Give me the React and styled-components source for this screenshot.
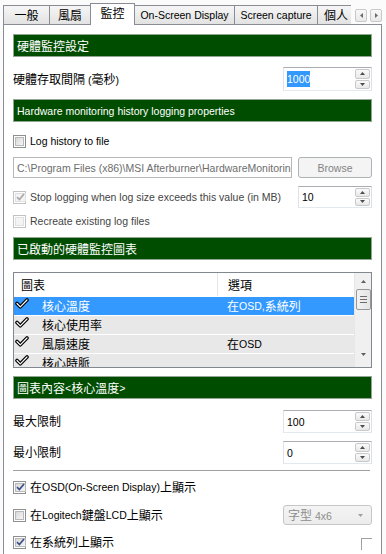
import React from 'react'
import styled, { createGlobalStyle } from 'styled-components'

const GlobalStyle = createGlobalStyle`
  html, body { margin: 0; padding: 0; }
  body {
    width: 386px;
    height: 554px;
    overflow: hidden;
    background: #fbfbfb;
    font-family: "Liberation Sans", "Noto Sans CJK TC", sans-serif;
    font-size: 10.5px;
    line-height: 14px;
    color: #000;
  }
  * { box-sizing: border-box; }
`

const Zh = styled.span`
  font-family: "Noto Sans CJK TC", sans-serif;
  font-size: 12px;
`

const cjk = /([\u3000-\u9fff\uff00-\uffef]+)/
const T = ({ children }) =>
  String(children)
    .split(cjk)
    .map((s, i) => (i % 2 ? <Zh key={i}>{s}</Zh> : s))

const Window = styled.div`
  display: flex;
  flex-direction: column;
  height: 554px;
`

const TabStrip = styled.div`
  display: flex;
  align-items: flex-end;
  height: 25px;
  padding: 3px 0 0 3px;
  position: relative;
  z-index: 1;
`

const TabList = styled.div`
  display: flex;
  align-items: flex-end;
  width: 348px;
  height: 22px;
  overflow: hidden;
`

const Tab = styled.div`
  flex: none;
  width: ${p => p.$w}px;
  height: ${p => (p.$active ? 22 : 19)}px;
  margin-bottom: ${p => (p.$active ? 0 : 1)}px;
  margin-left: -1px;
  border: 1px solid #898c95;
  border-bottom: none;
  background: ${p => (p.$active ? '#fff' : 'linear-gradient(#f6f6f6, #ececec 50%, #e2e2e2)')};
  display: flex;
  align-items: center;
  justify-content: ${p => (p.$left ? 'flex-start' : 'center')};
  padding: ${p => (p.$left ? '0 0 1px 6px' : '0 0 1px')};
  padding-bottom: ${p => (p.$active ? 4 : 1)}px;
  white-space: nowrap;
  &:first-child { margin-left: 0; }
`

const Arrows = styled.div`
  display: flex;
  gap: 3px;
  margin: 0 0 3px 4px;
`

const ArrowBtn = styled.div`
  width: 12px;
  height: 13px;
  border: 1px solid #c9c9c9;
  border-radius: 2px;
  background: linear-gradient(#f8f8f8, #e9e9e9);
  display: flex;
  align-items: center;
  justify-content: center;
`

const Panel = styled.div`
  flex: 1;
  margin: -1px 4px 0 3px;
  border: 1px solid #898c95;
  border-bottom: none;
  background: #fff;
  padding: 9px 9px 0;
  display: flex;
  flex-direction: column;
`

const Header = styled.div`
  height: 23px;
  margin-top: ${p => p.$mt || 0}px;
  background: #004d00;
  border: 1px solid #93a593;
  color: #fff;
  padding-left: 3px;
  display: flex;
  align-items: center;
  white-space: nowrap;
`

const Row = styled.div`
  display: flex;
  align-items: center;
  justify-content: space-between;
  height: ${p => p.$h}px;
  margin-top: ${p => p.$mt}px;
`

const Label = styled.span`
  color: ${p => p.$c || '#000'};
  white-space: nowrap;
`

const CheckLabel = styled.label`
  display: flex;
  align-items: center;
  color: ${p => p.$c || '#000'};
  white-space: nowrap;
`

const Box = styled.span`
  width: 13px;
  height: 13px;
  margin-right: 4px;
  border: 1px solid ${p => (p.$off ? '#c2c2c2' : '#8e8f8f')};
  padding: 1px;
  background: #fff;
  display: flex;
  flex: none;
`

const BoxInner = styled.span`
  flex: 1;
  border: 1px solid ${p => (p.$off ? '#e0e0e0' : '#b9b9b9')};
  background: ${p => (p.$off ? '#f4f4f4' : 'linear-gradient(135deg, #d8d8d8, #f6f6f6)')};
  display: flex;
  align-items: center;
  justify-content: center;
`

const Checkbox = ({ checked, off, children, color }) => (
  <CheckLabel $c={color}>
    <Box $off={off}>
      <BoxInner $off={off}>
        {checked && (
          <svg width="9" height="8" viewBox="0 0 9 8">
            <path
              d="M1 4.2 L3.4 6.6 L8 1"
              fill="none"
              stroke={off ? '#a9a9a9' : '#3b4f8a'}
              strokeWidth="1.7"
            />
          </svg>
        )}
      </BoxInner>
    </Box>
    <T>{children}</T>
  </CheckLabel>
)

const SpinBox = styled.div`
  width: ${p => p.$w}px;
  height: ${p => p.$h || 23}px;
  border: 1px solid #abadb3;
  border-color: #abadb3 #dbdfe6 #e3e9ef #e2e3ea;
  background: #fff;
  display: flex;
  align-items: center;
  padding-left: 3px;
`

const SpinText = styled.span`
  flex: 1;
  display: flex;
  align-items: center;
  span {
    background: ${p => (p.$sel ? '#3399ff' : 'transparent')};
    color: ${p => (p.$sel ? '#fff' : '#000')};
    padding: 1px 0;
  }
`

const SpinBtns = styled.div`
  width: 15px;
  align-self: stretch;
  margin: 1px;
  display: flex;
  flex-direction: column;
  gap: 1px;
`

const SpinBtn = styled.div`
  flex: 1;
  border: 1px solid #c9c9c9;
  border-radius: 2px;
  background: linear-gradient(#fafafa, #e8e8e8);
  display: flex;
  align-items: center;
  justify-content: center;
`

const Tri = ({ dir, color = '#4d4d4d' }) => (
  <svg width="5" height="3" viewBox="0 0 5 3">
    <path d={dir === 'up' ? 'M0 3 L2.5 0 L5 3 Z' : 'M0 0 L5 0 L2.5 3 Z'} fill={color} />
  </svg>
)

const TriSide = ({ dir }) => (
  <svg width="3" height="5" viewBox="0 0 3 5">
    <path d={dir === 'left' ? 'M3 0 L0 2.5 L3 5 Z' : 'M0 0 L3 2.5 L0 5 Z'} fill="#6a6a6a" />
  </svg>
)

const Spin = ({ w, h, value, sel }) => (
  <SpinBox $w={w} $h={h}>
    <SpinText $sel={sel}>
      <span>{value}</span>
    </SpinText>
    <SpinBtns>
      <SpinBtn><Tri dir="up" /></SpinBtn>
      <SpinBtn><Tri dir="down" /></SpinBtn>
    </SpinBtns>
  </SpinBox>
)

const PathField = styled.div`
  width: 279px;
  height: 21px;
  border: 1px solid #b8b8b8;
  background: #fff;
  color: #6d6d6d;
  padding-left: 3px;
  display: flex;
  align-items: center;
  white-space: nowrap;
  overflow: hidden;
`

const Button = styled.div`
  width: 74px;
  height: 21px;
  border: 1px solid #adb2b5;
  border-radius: 3px;
  background: #f4f4f4;
  color: #838383;
  display: flex;
  align-items: center;
  justify-content: center;
`

const List = styled.div`
  margin-top: 12px;
  height: 96px;
  border: 1px solid #828790;
  background: #fff;
  display: flex;
  flex: none;
`

const ListBody = styled.div`
  flex: 1;
  display: flex;
  flex-direction: column;
  overflow: hidden;
`

const ListHead = styled.div`
  height: 24px;
  flex: none;
  display: grid;
  grid-template-columns: 203px 1fr;
  border-bottom: 1px solid #fff;
  div {
    display: flex;
    align-items: center;
    padding-left: 7px;
  }
  div + div {
    border-left: 1px solid #e5e5e5;
    padding-left: 10px;
  }
`

const ListRow = styled.div`
  height: 19px;
  flex: none;
  display: grid;
  grid-template-columns: 203px 1fr;
  background: ${p => (p.$sel ? '#3399ff' : '#e8e8e8')};
  color: ${p => (p.$sel ? '#fff' : '#000')};
  border-bottom: 1px solid #fff;
`

const NameCell = styled.div`
  display: flex;
  align-items: center;
  padding-left: 1px;
  svg { align-self: flex-start; margin: 1px 13px 0 0; }
`

const OptCell = styled.div`
  display: flex;
  align-items: center;
  padding-left: 10px;
`

const ScrollBar = styled.div`
  width: 17px;
  flex: none;
  background: #f0f0f0;
  border-left: 1px solid #e6e6e6;
  display: flex;
  flex-direction: column;
  align-items: center;
  padding-top: 7px;
`

const Thumb = styled.div`
  width: 15px;
  height: 21px;
  margin-top: 6px;
  border: 1px solid #979797;
  border-radius: 2px;
  background: linear-gradient(90deg, #f3f3f3, #e4e4e4);
  display: flex;
  flex-direction: column;
  align-items: center;
  justify-content: center;
  gap: 2px;
  span { width: 7px; height: 1px; background: #6e6e6e; }
`

const Spacer = styled.div`
  flex: 1;
`

const Separator = styled.div`
  height: 2px;
  margin: 6px 2px 0 0;
  border-top: 1px solid #a0a0a0;
  border-bottom: 1px solid #fff;
`

const Select = styled.div`
  width: 89px;
  height: 20px;
  border: 1px solid #c6c6c6;
  border-radius: 3px;
  background: linear-gradient(#f4f4f4, #ececec);
  color: #8d8d8d;
  padding: 0 8px 0 4px;
  display: flex;
  align-items: center;
  justify-content: space-between;
`

const Corner = styled.div`
  width: 11px;
  height: 12px;
  margin-top: 4px;
  border-top: 1px solid #a0a0a0;
  border-left: 1px solid #a0a0a0;
`

const Tick = () => (
  <svg width="14" height="11" viewBox="0 0 14 11">
    <path d="M2 5.5 L5.3 8.8 L12 2" fill="none" stroke="#000" strokeWidth="3.6" strokeLinejoin="round" strokeLinecap="round" />
    <path d="M2 5.5 L5.3 8.8 L12 2" fill="none" stroke="#fff" strokeWidth="1.2" strokeLinejoin="round" strokeLinecap="round" />
  </svg>
)

const rows = [
  { name: '核心溫度', opt: '在OSD, 系統列', sel: true },
  { name: '核心使用率', opt: '' },
  { name: '風扇速度', opt: '在OSD' },
  { name: '核心時脈', opt: '' },
]

const tabs = [
  { label: '一般', w: 47 },
  { label: '風扇', w: 42 },
  { label: '監控', w: 45, active: true },
  { label: 'On-Screen Display', w: 101 },
  { label: 'Screen capture', w: 84 },
  { label: '個人', w: 50, left: true },
]

export default function App() {
  return (
    <Window>
      <GlobalStyle />
      <TabStrip>
        <TabList>
          {tabs.map(t => (
            <Tab key={t.label} $w={t.w} $active={t.active} $left={t.left}>
              <T>{t.label}</T>
            </Tab>
          ))}
        </TabList>
        <Arrows>
          <ArrowBtn><TriSide dir="left" /></ArrowBtn>
          <ArrowBtn><TriSide dir="right" /></ArrowBtn>
        </Arrows>
      </TabStrip>

      <Panel>
        <Header><T>硬體監控設定</T></Header>
        <Row $h={24} $mt={10}>
          <Label><T>硬體存取間隔 (毫秒)</T></Label>
          <Spin w={89} h={24} value="1000" sel />
        </Row>

        <Header $mt={8}>Hardware monitoring history logging properties</Header>
        <Row $h={16} $mt={11}>
          <Checkbox>Log history to file</Checkbox>
        </Row>
        <Row $h={21} $mt={8}>
          <PathField>C:\Program Files (x86)\MSI Afterburner\HardwareMonitoring.hml</PathField>
          <Button>Browse</Button>
        </Row>
        <Row $h={22} $mt={8}>
          <Checkbox checked off color="#444">Stop logging when log size exceeds this value (in MB)</Checkbox>
          <Spin w={74} h={22} value="10" />
        </Row>
        <Row $h={16} $mt={5}>
          <Checkbox off color="#444">Recreate existing log files</Checkbox>
        </Row>

        <Header $mt={8}><T>已啟動的硬體監控圖表</T></Header>
        <List>
          <ListBody>
            <ListHead>
              <div><T>圖表</T></div>
              <div><T>選項</T></div>
            </ListHead>
            {rows.map(r => (
              <ListRow key={r.name} $sel={r.sel}>
                <NameCell>
                  <Tick />
                  <T>{r.name}</T>
                </NameCell>
                <OptCell><T>{r.opt}</T></OptCell>
              </ListRow>
            ))}
          </ListBody>
          <ScrollBar>
            <Tri dir="up" color="#5f5f5f" />
            <Thumb><span /><span /><span /></Thumb>
            <Spacer />
            <div style={{ marginBottom: 8 }}><Tri dir="down" color="#5f5f5f" /></div>
          </ScrollBar>
        </List>

        <Header $mt={8}><T>圖表內容&lt;核心溫度&gt;</T></Header>
        <Row $h={23} $mt={11}>
          <Label><T>最大限制</T></Label>
          <Spin w={89} value="100" />
        </Row>
        <Row $h={23} $mt={8}>
          <Label><T>最小限制</T></Label>
          <Spin w={89} value="0" />
        </Row>
        <Separator />
        <Row $h={16} $mt={7}>
          <Checkbox checked>在OSD(On-Screen Display)上顯示</Checkbox>
        </Row>
        <Row $h={20} $mt={10}>
          <Checkbox>在Logitech鍵盤LCD上顯示</Checkbox>
          <Select>
            <span><T>字型 4x6</T></span>
            <Tri dir="down" color="#a0a0a0" />
          </Select>
        </Row>
        <Row $h={16} $mt={9}>
          <Checkbox checked>在系統列上顯示</Checkbox>
          <Corner />
        </Row>
      </Panel>
    </Window>
  )
}
